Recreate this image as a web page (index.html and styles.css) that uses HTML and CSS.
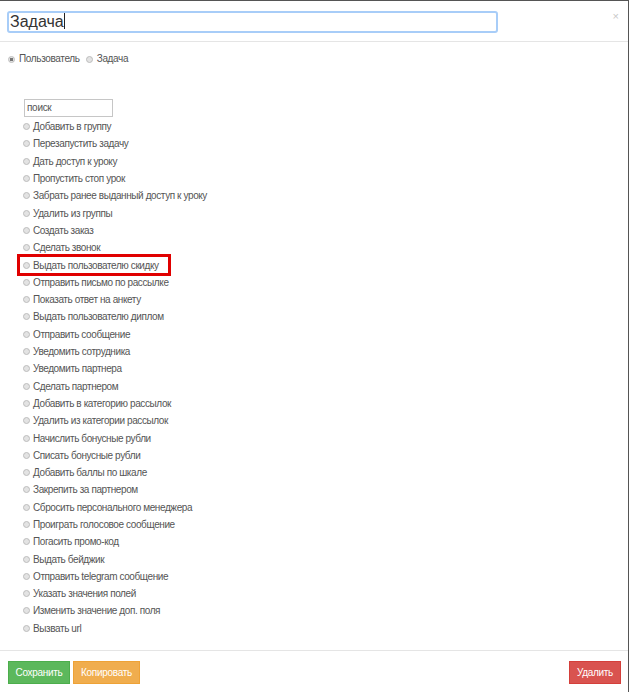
FILE: index.html
```html
<!DOCTYPE html>
<html lang="ru">
<head>
<meta charset="utf-8">
<link rel="stylesheet" href="styles.css">
</head>
<body>
<div class="modal">
  <div class="modal-header">
    <div class="title-input">Задача<span class="caret"></span></div>
    <span class="close">×</span>
  </div>
  <div class="modal-body">
    <div class="type-row">
      <label class="opt"><span class="radio checked"></span>Пользователь</label>
      <label class="opt"><span class="radio"></span>Задача</label>
    </div>
    <div class="search">поиск</div>
    <ul class="actions">
      <li><span class="radio"></span>Добавить в группу</li>
      <li><span class="radio"></span>Перезапустить задачу</li>
      <li><span class="radio"></span>Дать доступ к уроку</li>
      <li><span class="radio"></span>Пропустить стоп урок</li>
      <li><span class="radio"></span>Забрать ранее выданный доступ к уроку</li>
      <li><span class="radio"></span>Удалить из группы</li>
      <li><span class="radio"></span>Создать заказ</li>
      <li><span class="radio"></span>Сделать звонок</li>
      <li class="highlight"><span class="radio"></span>Выдать пользователю скидку</li>
      <li><span class="radio"></span>Отправить письмо по рассылке</li>
      <li><span class="radio"></span>Показать ответ на анкету</li>
      <li><span class="radio"></span>Выдать пользователю диплом</li>
      <li><span class="radio"></span>Отправить сообщение</li>
      <li><span class="radio"></span>Уведомить сотрудника</li>
      <li><span class="radio"></span>Уведомить партнера</li>
      <li><span class="radio"></span>Сделать партнером</li>
      <li><span class="radio"></span>Добавить в категорию рассылок</li>
      <li><span class="radio"></span>Удалить из категории рассылок</li>
      <li><span class="radio"></span>Начислить бонусные рубли</li>
      <li><span class="radio"></span>Списать бонусные рубли</li>
      <li><span class="radio"></span>Добавить баллы по шкале</li>
      <li><span class="radio"></span>Закрепить за партнером</li>
      <li><span class="radio"></span>Сбросить персонального менеджера</li>
      <li><span class="radio"></span>Проиграть голосовое сообщение</li>
      <li><span class="radio"></span>Погасить промо-код</li>
      <li><span class="radio"></span>Выдать бейджик</li>
      <li><span class="radio"></span>Отправить telegram сообщение</li>
      <li><span class="radio"></span>Указать значения полей</li>
      <li><span class="radio"></span>Изменить значение доп. поля</li>
      <li><span class="radio"></span>Вызвать url</li>
    </ul>
  </div>
  <div class="modal-footer">
    <div class="left">
      <button class="btn btn-success">Сохранить</button>
      <button class="btn btn-warning">Копировать</button>
    </div>
    <button class="btn btn-danger">Удалить</button>
  </div>
</div>
</body>
</html>
```
FILE: styles.css
```css
html, body {
  margin: 0;
  padding: 0;
  background: #fff;
}
body {
  font-family: "Liberation Sans", Arial, sans-serif;
  color: #555;
}
.modal {
  width: 628px;
  height: 691px;
  border-top: 1px solid #555;
  border-right: 1px solid #555;
  display: flex;
  flex-direction: column;
  background: #fff;
}
.modal-header {
  height: 41px;
  flex: none;
  border-bottom: 1px solid #e5e5e5;
  display: flex;
  align-items: flex-start;
  justify-content: space-between;
  padding: 10px 9px 0 7px;
  box-sizing: border-box;
}
.title-input {
  width: 491px;
  height: 22px;
  box-sizing: border-box;
  border: 2px solid #a8cdf8;
  border-radius: 3px;
  font-size: 16px;
  line-height: 18px;
  color: #333;
  padding-left: 1px;
}
.caret {
  display: inline-block;
  width: 1px;
  height: 16px;
  background: #222;
  vertical-align: -2px;
}
.close {
  font-size: 11px;
  color: #c8c8c8;
  line-height: 11px;
  margin-top: 0;
}
.modal-body {
  flex: 1;
  padding: 0 0 0 20px;
}
.type-row {
  display: flex;
  gap: 6px;
  margin-top: 11px;
  margin-left: -12px;
  font-size: 10px;
  line-height: 12px;
  height: 12px;
  letter-spacing: -0.35px;
}
.opt {
  display: flex;
  align-items: center;
}
.radio {
  display: inline-block;
  width: 7px;
  height: 7px;
  border-radius: 50%;
  background: #e3e3e3;
  border: 1px solid #bdbdbd;
  box-sizing: border-box;
  margin-right: 3px;
  flex: none;
}
.opt .radio {
  margin-right: 4px;
}
.radio.checked {
  background: radial-gradient(circle, #777 0 1.5px, #e3e3e3 2px);
}
.search {
  margin: 34px 0 0 4px;
  width: 89px;
  height: 18px;
  box-sizing: border-box;
  border: 1px solid #c6c6c6;
  font-size: 10px;
  line-height: 16px;
  padding-left: 2px;
  color: #555;
  letter-spacing: -0.3px;
}
.actions {
  list-style: none;
  margin: 1px 0 0 0;
  padding: 0 0 0 3px;
  font-size: 10px;
}
.actions li {
  height: 17.31px;
  display: flex;
  align-items: center;
  letter-spacing: -0.4px;
}
.actions li.highlight {
  width: 154px;
  margin-left: -6px;
  padding-left: 6px;
  box-shadow: 0 0 0 3px #e00000 inset;
  height: 22px;
  margin-top: -2.35px;
  margin-bottom: -2.35px;
  box-sizing: border-box;
}
.modal-footer {
  border-top: 1px solid #e5e5e5;
  height: 42px;
  flex: none;
  display: flex;
  justify-content: space-between;
  align-items: flex-start;
  padding: 10px 7px 0 8px;
  box-sizing: border-box;
}
.left {
  display: flex;
  gap: 3px;
}
.btn {
  font-family: "Liberation Sans", Arial, sans-serif;
  font-size: 10px;
  color: #fff;
  height: 23px;
  border: 1px solid;
  border-radius: 0;
  padding: 0 6px;
  margin: 0;
  letter-spacing: -0.3px;
}
.btn-success {
  background: #5cb85c;
  border-color: #4cae4c;
  width: 62px;
}
.btn-warning {
  background: #f0ad4e;
  border-color: #eea236;
  width: 67px;
}
.btn-danger {
  background: #d9534f;
  border-color: #d43f3a;
  width: 52px;
}
```
